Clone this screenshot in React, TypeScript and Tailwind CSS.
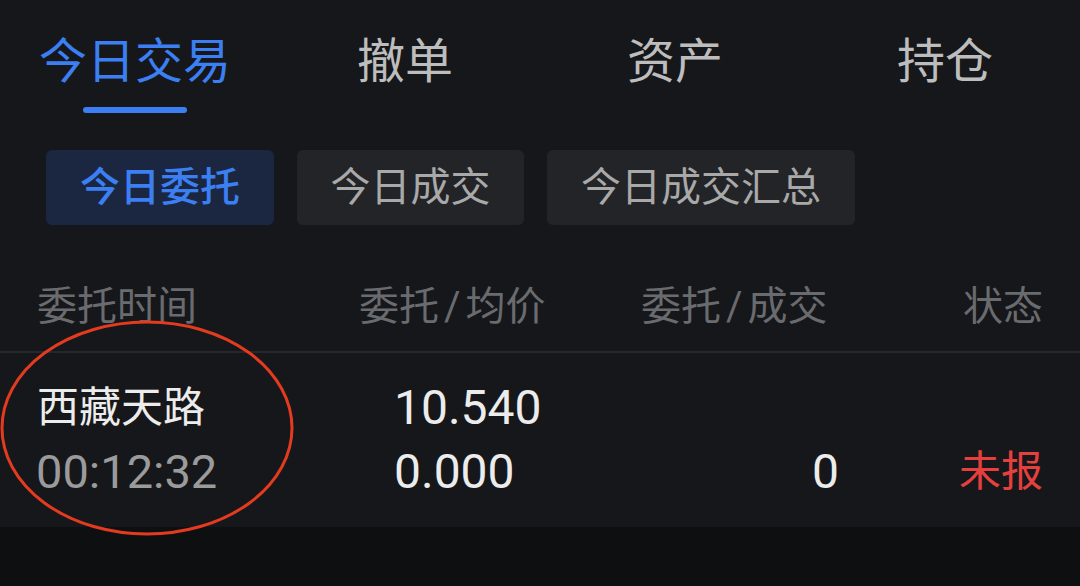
import React from 'react';

const tabs = ['今日交易', '撤单', '资产', '持仓'];

const subTabs = [
  { label: '今日委托', w: 'w-[228px]', active: true },
  { label: '今日成交', w: 'w-[227px]', active: false },
  { label: '今日成交汇总', w: 'w-[308px]', active: false },
];

const App = () => {
  return (
    <div className="relative flex min-h-screen flex-col bg-[#16171a] font-['Roboto','Noto_Sans_CJK_SC',sans-serif]">
      {/* top tabs */}
      <div className="grid grid-cols-4 pt-[38px]">
        {tabs.map((t, i) => (
          <div key={t} className="flex flex-col items-center">
            <span
              className={`h-[48px] text-[48px] leading-[48px] ${
                i === 0 ? 'text-[#3b7ff3]' : 'text-[#bdbdbd]'
              }`}
            >
              {t}
            </span>
            <div
              className={`mt-[21px] h-[6px] w-[104px] rounded-full ${
                i === 0 ? 'bg-[#3b7ff3]' : 'bg-transparent'
              }`}
            />
          </div>
        ))}
      </div>

      {/* sub tabs */}
      <div className="mt-[37px] flex gap-[23px] pl-[46px]">
        {subTabs.map((s) => (
          <div
            key={s.label}
            className={`flex h-[75px] items-center justify-center rounded-md text-[40px] ${s.w} ${
              s.active ? 'bg-[#1b2740] font-medium text-[#3b7ff3]' : 'bg-[#232428] text-[#a9a9a9]'
            }`}
          >
            {s.label}
          </div>
        ))}
      </div>

      {/* table header */}
      <div className="grid grid-cols-[322px_282px_200px_1fr] px-[37px] pb-[24px] pt-[62px] text-[40px] leading-[40px] text-[#6a6b6e]">
        <span>委托时间</span>
        <span>委托<span className="px-[5px]">/</span>均价</span>
        <span>委托<span className="px-[5px]">/</span>成交</span>
        <span className="text-right">状态</span>
      </div>
      <div className="h-[2px] bg-[#26272b]" />

      {/* order row */}
      <div className="grid grid-cols-[322px_282px_200px_1fr] px-[37px] pb-[31px] pt-[31px] text-[#ececec]">
        <div className="flex flex-col gap-[16px]">
          <span className="h-[48px] text-[42px] leading-[48px]">西藏天路</span>
          <span className="-ml-[1px] h-[48px] text-[47px] leading-[48px] text-[#9b9b9b]">00:12:32</span>
        </div>
        <div className="flex flex-col gap-[16px] pl-[35px]">
          <span className="h-[48px] text-[48px] leading-[48px]">10.540</span>
          <span className="h-[48px] text-[48px] leading-[48px]">0.000</span>
        </div>
        <div className="flex flex-col gap-[16px] pr-[2px] text-right">
          <span className="h-[48px]" />
          <span className="h-[48px] text-[48px] leading-[48px]">0</span>
        </div>
        <div className="flex flex-col gap-[16px] text-right">
          <span className="h-[48px]" />
          <span className="h-[48px] text-[42px] leading-[48px] text-[#e5403d]">未报</span>
        </div>
      </div>

      <div className="flex-1 bg-[#0e0f11]" />

      {/* red annotation circle */}
      <svg className="pointer-events-none absolute left-0 top-0 h-[586px] w-[300px]" viewBox="0 0 300 586">
        <ellipse cx="147" cy="428" rx="145" ry="106" fill="none" stroke="#e23b1f" strokeWidth="3" />
      </svg>
    </div>
  );
};

export default App;
